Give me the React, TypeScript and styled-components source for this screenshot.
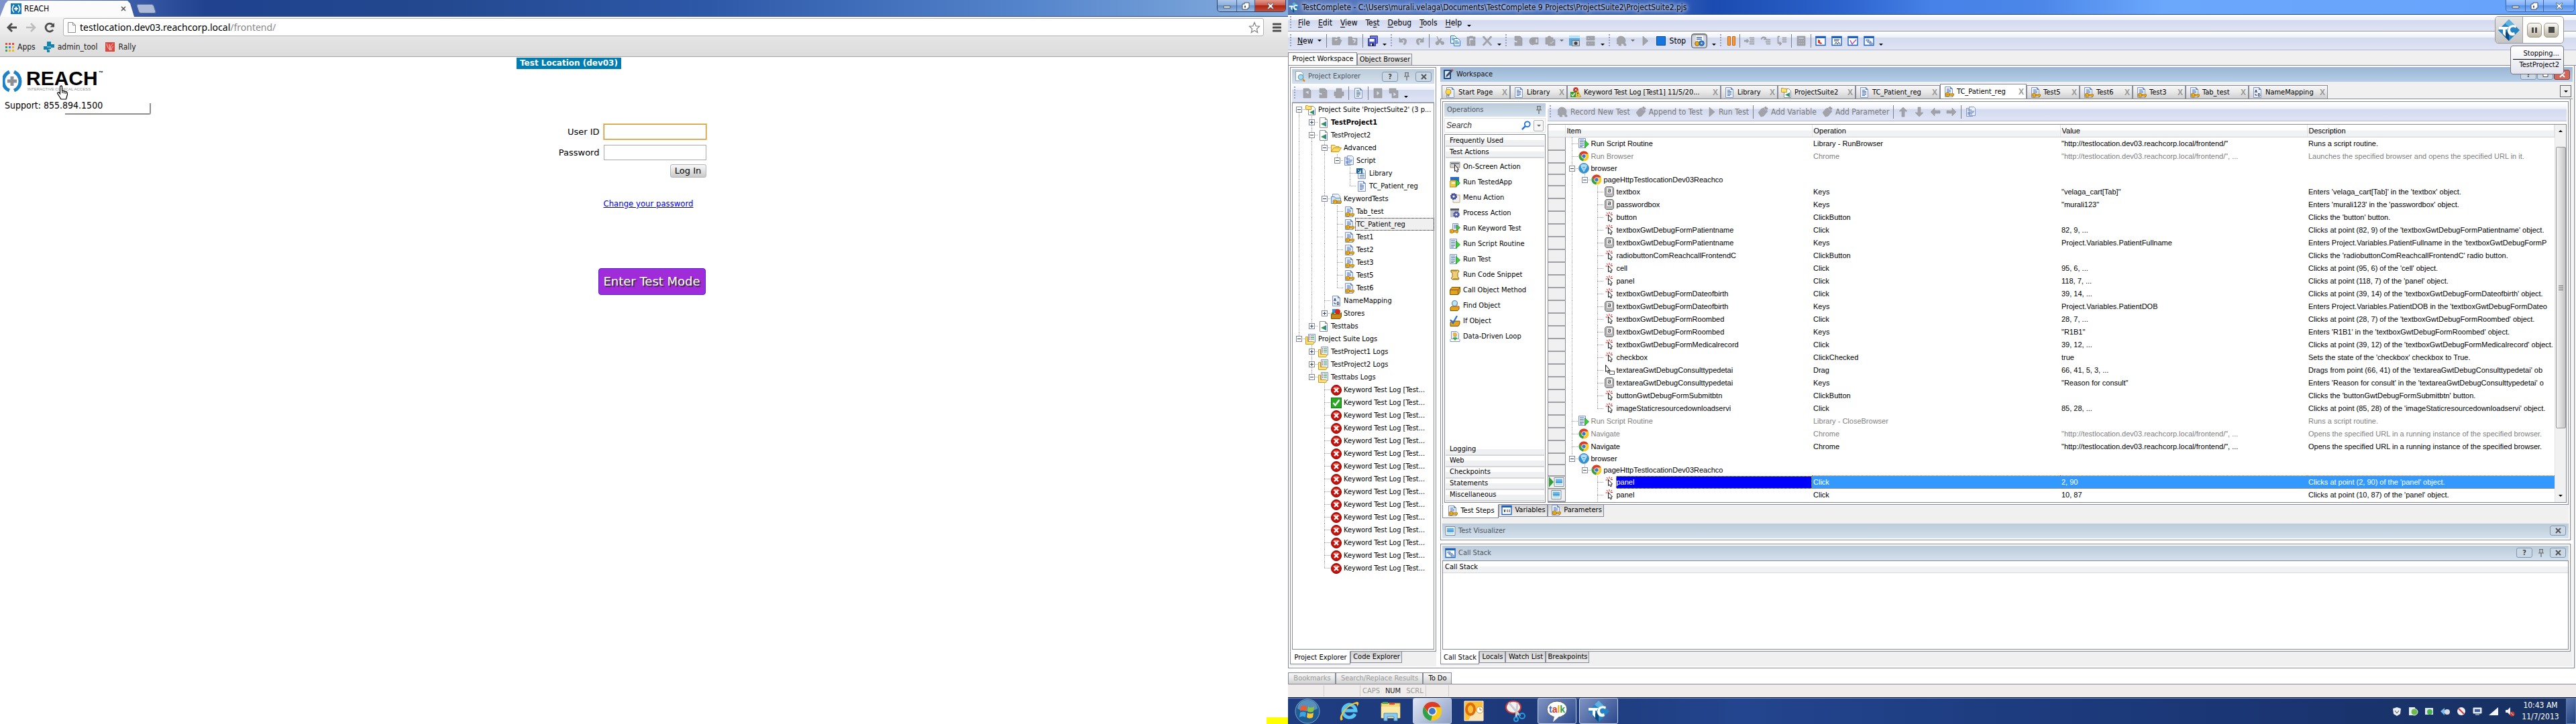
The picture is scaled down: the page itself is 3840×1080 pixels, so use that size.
import React from "react";
import styled, { createGlobalStyle, css } from "styled-components";

const ui = `"DejaVu Sans Condensed", "DejaVu Sans", "Liberation Sans", sans-serif`;
const wide = `"DejaVu Sans", "Liberation Sans", sans-serif`;
const grid = `"Liberation Sans", Arial, sans-serif`;
const line = "#868a98";

const Global = createGlobalStyle`
  *, *::before, *::after { box-sizing: border-box; }
  body { margin: 0; background: #fff; font: 11px/16px ${ui}; color: #000; }
  button, input { font: inherit; color: inherit; }
  svg { display: block; flex: none; }
`;

/* ---------- icons ---------- */

type SvgProps = { s?: number; w?: number; children: React.ReactNode; box?: string };
const Svg = ({ s = 16, w, box = "0 0 16 16", children }: SvgProps) => (
  <svg width={w ?? s} height={s} viewBox={box} aria-hidden="true">{children}</svg>
);
const page = <path d="M2.5.5h8l3 3v12h-11z" fill="#eaf1fc" stroke="#8397c6" />;
const fold = <path d="M10.5.5v3h3" fill="#6e9bd8" stroke="#5c83c4" />;
const keyShape = (
  <g fill="#f0b31c" stroke="#a86f08" strokeWidth=".8">
    <circle cx="6" cy="12" r="3" /><path d="M9 10.8h6.5v2.5h-1v1.3h-1.5v-1.3H9z" /><circle cx="5.5" cy="12" r=".7" fill="#fff" />
  </g>
);
const play = <path d="M9.5 3.5v11l6-5.5z" fill="#3ecb3e" stroke="#118a1a" strokeWidth=".8" />;
const DocIcon = () => <Svg>{page}{fold}<path d="M5 4.500h4M5 6.500h6M5 8.500h6M5 10.500h6M5 12.500h4" stroke="#4f70c0" /></Svg>;
const ScriptIcon = () => <Svg><path d="M1.5 2.5h9v12h-9z" fill="#dfe8fa" stroke="#8397c6" /><path d="M5.5.5h7l2 2v11h-9z" fill="#eaf1fc" stroke="#8397c6" /><path d="M3 5h6M7 7h6M3 9h9M3 11h7" stroke="#4f70c0" /></Svg>;
const DocKeyIcon = () => <Svg>{page}{fold}<path d="M5 4h4M5 6h6M5 8h6" stroke="#4f70c0" />{keyShape}</Svg>;
const LinkDocIcon = () => <Svg>{page}<path d="M7 8h5M5 10.5h7M5 13h7" stroke="#4f70c0" /><path d="M0 0h9v8H0z" fill="#17609c" /><path d="M2 2l4 4M6.5 2.5V6.5H2.5" stroke="#fff" fill="none" /></Svg>;
const ProjIcon = () => <Svg><path d="M2.5.5h8l3 3v12h-11z" fill="#fff" stroke="#8a8f94" /><path d="M10.5.5v3h3" fill="#bbb" stroke="#8a8f94" /><path d="M12 6v8l-8-4z" fill="#2f9a4a" /><path d="M12 6v8l-3-4z" fill="#3b7bd0" /></Svg>;
const SuiteIcon = () => <Svg><path d="M4.5 2.5h7l3 3v10h-10z" fill="#fff" stroke="#8a8f94" /><path d="M13 8v7l-7-3.5z" fill="#2f9a4a" /><path d="M13 8v7l-2.5-3.5z" fill="#3b7bd0" /><path d="M.5 1.5h3l1 1h4v5h-8z" fill="#ffe07a" stroke="#c79a1c" /></Svg>;
const FolderIcon = () => <Svg><path d="M.5 13.5v-10h5l1.5 2h5v2" fill="#fbe69a" stroke="#c9961c" /><path d="M.5 13.5l3.5-6h11.5l-4 6z" fill="#ffd95e" stroke="#c9961c" /></Svg>;
const KeyFolderIcon = () => <Svg><path d="M2.5.5h8l3 3v7h-11z" fill="#eaf1fc" stroke="#8397c6" /><path d="M.5 4.5h5l1 2h8v8h-14z" fill="#cfe2fa" stroke="#5f8bcb" />{keyShape}</Svg>;
const MapIcon = () => <Svg>{page}{fold}<path d="M4.5 8l1.5-4 1.5 4M5 7h2M9.5 9.5v4h1.5c1.5 0 1.5-2 0-2 1 0 1-2 0-2zM5 10v2h3" stroke="#1d2a4c" strokeWidth=".9" fill="none" /></Svg>;
const StoresIcon = () => <Svg><path d="M2 1h7v6H2z" fill="#3a8ee0" /><circle cx="10" cy="5" r="4" fill="#d8251d" /><path d="M1 6h4v3H1z" fill="#2da33c" /><path d="M.5 8.5h13l2-2v6l-2 3H.5z" fill="#c98716" stroke="#7d4f04" /></Svg>;
const LogIcon = () => <Svg><path d="M4.5.5h10v12h-10z" fill="#eaf1fc" stroke="#8397c6" /><path d="M6 3h1M6 5.5h1M6 8h1" stroke="#d33" strokeWidth="1.5" /><path d="M8 3h5M8 5.5h5M8 8h5" stroke="#3a9a4a" /><path d="M.5 4.5h3v7h7l3 1-2 3H.5z" fill="#ffe07a" stroke="#c79a1c" /></Svg>;
const ErrIcon = () => <Svg><circle cx="8" cy="8" r="7.5" fill="#c8120e" stroke="#8b0500" /><path d="M2.5 6a6 5 0 0 1 11 0z" fill="#ea6a5e" /><path d="M5 5l6 6M11 5l-6 6" stroke="#fff" strokeWidth="2.4" /></Svg>;
const OkIcon = () => <Svg><rect x=".5" y=".5" width="15" height="15" fill="#2aa824" stroke="#117a10" /><path d="M3.5 8l3 3.5 6-8" stroke="#fff" strokeWidth="2.2" fill="none" /></Svg>;
const ResultIcon = () => <Svg><circle cx="8" cy="4" r="3.8" fill="#d3221c" /><path d="M6.5 2.5l3 3M9.5 2.5l-3 3" stroke="#fff" /><path d="M10.5 4.5l5 10h-8z" fill="#ffd92e" stroke="#a87f00" strokeWidth=".7" /><path d="M11 8v3M11 12v1" stroke="#222" strokeWidth="1.2" /><path d="M0 7h8v8H0z" fill="#35a52d" /><path d="M1.5 11l2 2 3-4" stroke="#fff" strokeWidth="1.4" fill="none" /></Svg>;
const StartIcon = () => <Svg>{page}{fold}<circle cx="5" cy="7" r="4" fill="#ffd84a" stroke="#b98a10" strokeWidth=".8" /><path d="M3.5 11h3v3h-3z" fill="#8b8b8b" /></Svg>;
const RunScriptIcon = () => <Svg><path d="M.5.5h10v14H.5z" fill="#eaf1fc" stroke="#8397c6" /><path d="M2 3h6M2 5.5h6M2 8h6M2 10.5h6M2 12.5h4" stroke="#4f70c0" />{play}</Svg>;
const ChromeIcon = ({ s = 16 }: { s?: number }) => (
  <Svg s={s}>
    <circle cx="8" cy="8" r="7.5" fill="#f8ca1c" />
    <path d="M8 .5a7.5 7.5 0 0 1 6.700 4.1H8L4.8 9 1.4 4.3A7.5 7.5 0 0 1 8 .5z" fill="#dc3a2b" />
    <path d="M1.4 4.3L4.9 10 8 11.5 7 15.4A7.5 7.5 0 0 1 1.4 4.3z" fill="#31a04c" />
    <circle cx="8" cy="8" r="3.5" fill="#fff" /><circle cx="8" cy="8" r="2.7" fill="#3d78c9" />
  </Svg>
);
const GlobeIcon = () => <Svg><circle cx="8" cy="8" r="7.5" fill="#2e94d8" stroke="#6f93b3" /><path d="M3 4a6 5 0 0 1 10 0l-1 2H4z" fill="#a9dcf7" /><path d="M4 6l4 7 4-7-4 2z" fill="#7cc8f2" stroke="#fff" strokeWidth=".7" /></Svg>;
const KeysIcon = () => <Svg><path d="M3.500.5h9l2 2v11l-2 2h-9l-2-2v-11z" fill="#b9b9b9" stroke="#6c6c6c" /><rect x="4" y="1.5" width="8.5" height="9.5" rx="1" fill="#f2f2f2" stroke="#8e8e8e" strokeWidth=".6" /><path d="M6 4.2h3.5v4.3H6.5V6.3h3" stroke="#444" fill="none" /></Svg>;
const ClickIcon = () => <Svg><path d="M8 0v3M4 1l2 2.5M12 1l-2 2.5M2.5 5h3M10 4.5h3" stroke="#f01515" /><path d="M6.5 4.5v9l2-1.5 1.5 3 1.5-1-1-2.5 2-.5z" fill="#fff" stroke="#000" strokeWidth=".9" /></Svg>;
const DragIcon = () => <Svg><path d="M2.5.5v10l2-1.5 1.5 3.5 1.5-1L6 8.5h3z" fill="#fff" stroke="#000" strokeWidth=".9" /><path d="M8.5 9.5h7v5h-7z" fill="#fff" stroke="#555" /></Svg>;
const TcMark = ({ s = 16 }: { s?: number }) => (
  <Svg s={s} box="0 0 32 32">
    <path d="M16 0l16 16-16 16L0 16z" fill="#2484c4" /><path d="M16 14v18L8 24z" fill="#0a4a80" /><path d="M16 0l8 8-8 3-6-5z" fill="#5fb1e0" />
    <path d="M1 11h14v4h-4v11l-4-5v-6H1zM27 9c-9-3-14 3-13 9 1 5 6 8 11 5l-1-4c-4 2-6-1-6-4s4-5 8-2z" fill="#fff" />
  </Svg>
);
const ReachMark = ({ s = 16 }: { s?: number }) => (
  <Svg s={s}><path d="M0 0h16v16H0z" fill="#1479bd" /><path d="M5 2.5a7 7 0 0 0 0 11M11 2.5a7 7 0 0 1 0 11" stroke="#fff" strokeWidth="1.6" fill="none" /><path d="M8 5v6M5 8h6" stroke="#fff" strokeWidth="2" /></Svg>
);
const PinIcon = () => <Svg s={12} box="0 0 12 12"><path d="M3 .5h6M4 .5v5M8 .5v5M2 6h8M6 6v6" stroke="#666" strokeWidth="1.2" fill="none" /></Svg>;
const PencilIcon = () => <Svg><path d="M1.5 1.5h10v13h-10z" fill="#2a5a98" stroke="#1d3f72" /><path d="M3 3h7v10H3z" fill="#dfeaf8" /><path d="M4 12l1-3 7-8 2.5 2L7 11z" fill="#394a66" /><path d="M12 1l1.5-1L16 2l-1.5 1z" fill="#e0442c" /></Svg>;
const SearchDocIcon = () => <Svg><path d="M1.5.5h8l3 3v11h-11z" fill="#fafcff" stroke="#9aa3b5" /><circle cx="9" cy="9" r="3.8" fill="#a4dcf6" stroke="#4b8fb8" /><path d="M12 12l3 3.5" stroke="#e08a1c" strokeWidth="2.2" /></Svg>;
const WinIcon = ({ mark }: { mark?: React.ReactNode }) => <Svg><path d="M1 1.5h14v13H1z" fill="#fff" stroke="#2166bd" strokeWidth="1.4" /><path d="M.5 1h15v3H.5z" fill="#1e62c0" />{mark}</Svg>;
const stackMark = <path d="M4 6h4v2H4zM6 8.5h5v2H6zM9 11h4v2H9z" fill="#dbe7fa" stroke="#3f68a8" strokeWidth=".8" />;
const PicIcon = () => <Svg><path d="M1 1.5h14v13H1z" fill="#fff" stroke="#7a8797" /><path d="M3 3.5h10v4H3z" fill="#64b7ee" /><path d="M3 7.5h10v1.5H3z" fill="#1b78c8" /><path d="M3 9h10v3.5H3z" fill="#aee0ef" /></Svg>;

const Gray = ({ d, w = 16 }: { d: string; w?: number }) => (
  <Svg s={16} w={w} box={`${(16 - w) / 2} 0 ${w} 16`}><path d={d} fill="#a2a3a8" stroke="#929399" strokeWidth=".6" fillRule="evenodd" /></Svg>
);
const gOpen = "M1 14V3h5l1 2h6v2h2l-3 7zM3 7l7-5 3 1-6 5z";
const gClose = "M1 2h5l1 2h7v10H1zM6 6l4 2-3 4 4-1 2-5-5-2z";
const gUndo = "M2 3v7h6L5.5 7.5C9 5 12 8 8 13l2 1c6-7 1-12-6-8z";
const gRedo = "M14 3v7H8l2.5-2.5C7 5 4 8 8 13l-2 1C0 7 5 2 12 6z";
const gCut = "M5 1l2 7-2 1a2.5 2.5 0 1 0 3 2l1-1 2 1a2.3 2.3 0 1 0 2-2l-3-1 2-3-1-1-3 3z";
const gPaste = "M2 2h3l1-1h4l1 1h3v4h-3V4H5v9h1v2H2zM7 7h7v8H7z";
const gX = "M1 2l2-1 5 5.5L13 1l2 1-5.5 6L15 14l-2 1-5-5.5L3 15l-2-1 5.5-6z";
const gDoc = "M3 1h8l3 3v11H3v-5l4 1V8L3 7zM8 5v1h4V5z";
const gGear = "M1 8a5 5 0 0 1 5-5h8v10H8l-2 1a5 5 0 0 1-5-6zm5-3v6M3 8h6m1-3h3v6h-3z";
const gCheck = "M1 3h3l1-2h3l1 2h3v3h3v9H5v-2H1zM7 10l2 3 5-5-1-1-4 4-1-2z";
const gList = "M2 1h12v6H2zM2 9h12v6H2zM4 3v2h2V3zM4 11v2h2v-2zM8 3v1h4V3zM8 11v1h4v-1z";
const gHead = "M7 1a6 6 0 0 0-5 9l-1 2 3 1v2h4l-1-3h4l1 3h3v-2l-2-2c3-5-1-10-6-10z";
const gPlay = "M4 1l8 7-8 7z";
const gStep = "M0 7h4V5l3 3-3 3V9H0zM8 3h7v1H8zM9 6h6v1H9zM8 9h7v1H8zM8 12h7v1H8z";
const gOver = "M1 5c1-4 6-4 7-1V2l1 4H5l2-1C6 3 3 3 2 6zM9 6h6v1H9zM8 9h7v1H8zM9 12h6v1H9z";
const gOut = "M5 1H2v11h3v3l3-3-3-3v2H3V2h2zM9 3h6v1H9zM9 6h6v1H9zM9 9h6v1H9z";
const gCalc = "M2 1h12v14H2zM4 3v2h8V3zM4 7v2h2V7zM7 7v2h2V7zM10 7v2h2V7zM4 11v2h2v-2zM7 11v2h2v-2zM10 11v2h2v-2z";
const gNewDoc = "M3 1h8l3 3v11H3zM5 6l6-2v6z";
const gPlus = "M1 9l5-6 4-1 5 5-6 7-4 1zM11 0h2v2h2v2h-2v2h-2V4H9V2h2z";
const gPrint = "M4 1h8v5h3v6h-3v3H3v-3H1V6h3z";
const gUp = "M8 1l6 6h-4v8H6V7H2z";
const gDown = "M8 15l6-6h-4V1H6v8H2z";
const gLeft = "M1 8l6-6v4h8v4H7v4z";
const gRight = "M15 8L9 2v4H1v4h8v4z";

const SaveIcon = () => <Svg><path d="M4.5.5h11v11h-11z" fill="#6a76d8" stroke="#3a3fa4" /><path d="M1.5 4.5h11v11h-11z" fill="#5763d0" stroke="#2f3590" /><path d="M3.5 5h7v4h-7z" fill="#fff" /><path d="M4 11.5h6v4H4z" fill="#222a5c" /><path d="M5 12h2v3H5z" fill="#fff" /></Svg>;
const CopyIcon = () => <Svg><path d="M1.5.5h6l3 3v8h-9z" fill="#e9f4ff" stroke="#2a7ac9" /><path d="M6.5 4.5h6l3 3v8h-9z" fill="#e9f4ff" stroke="#2a7ac9" /><path d="M3 4h3M3 6h3M8 8h4M8 10h6M8 12h6" stroke="#2a7ac9" /></Svg>;
const CameraIcon = () => <Svg><path d="M0 0h16v15H0z" fill="#59a7dd" /><path d="M0 0h16v4H0z" fill="#b8e1f7" /><path d="M4.5 7.5h11v8h-11z" fill="#c7cdd2" stroke="#6b747c" /><circle cx="10" cy="11.5" r="2.5" fill="#37424b" /></Svg>;
const ToggleDocIcon = () => <Svg><path d="M3 0h11v10H3z" fill="#fff" /><path d="M4 3h8M4 5.5h8" stroke="#3f6bbf" strokeWidth="1.4" /><circle cx="5" cy="12" r="3.3" fill="#e8ad1e" stroke="#8b6108" /><circle cx="11.5" cy="11.5" r="3.8" fill="#3380d2" stroke="#174f93" /><circle cx="11.5" cy="11.5" r="1" fill="#fff" /></Svg>;
const OnScreenIcon = () => <Svg><path d="M1 1h14v8H1z" fill="#d8d4cb" stroke="#8b8578" /><path d="M2 2h12v2H2z" fill="#6f7f9a" /><path d="M7.5 4.5v10l2-1.5 1.5 3 1.5-1-1-3h2z" fill="#fff" stroke="#000" strokeWidth=".9" /></Svg>;
const TestedAppIcon = () => <Svg><path d="M1 0h13v12H1z" fill="#2a6ccc" /><path d="M2 5h8v10H0V7z" fill="#f5c84a" stroke="#a2770d" strokeWidth=".8" /><path d="M3 8h5v2H3z" fill="#fff" />{play}</Svg>;
const GearIcon = () => <Svg><path d="M5 4h10v11H5z" fill="#eef1fb" stroke="#c9a660" /><circle cx="6" cy="6" r="4" fill="#5560b0" stroke="#31397e" strokeDasharray="2 1" strokeWidth="2" /><circle cx="6" cy="6" r="1.5" fill="#fff" /></Svg>;
const ProcessIcon = () => <Svg><path d="M1 1h13v13H1z" fill="#bfc4c9" /><path d="M1 1h13v3H1z" fill="#555b63" /><circle cx="10" cy="10" r="3.8" fill="#6a74c2" stroke="#3c4590" strokeDasharray="2 1" strokeWidth="2" /><circle cx="10" cy="10" r="1.3" fill="#fff" /></Svg>;
const RunKeyIcon = () => <Svg><path d="M4.5.5h8v10h-8z" fill="#eaf1fc" stroke="#8397c6" /><path d="M6 3h5M6 5h5M6 7h5" stroke="#4f70c0" /><path d="M10.5 2.5v8l5-4z" fill="#3ecb3e" stroke="#118a1a" strokeWidth=".8" /><g transform="translate(-3 0)">{keyShape}</g></Svg>;
const SnippetIcon = () => <Svg><path d="M2 1h11l1 2-2 2v6l2 2-1 2H4l-2-2 2-2V5L2 4z" fill="#f0cf74" stroke="#8b6a12" /><path d="M2 2h9M5 14h8" stroke="#8b6a12" /></Svg>;
const MethodIcon = () => <Svg><path d="M.5 7.5l3-4h12v7l-3 4H.5z" fill="#e2a41c" stroke="#7d5304" /><path d="M.5 7.5h12v7M12.5 7.5l3-4" stroke="#7d5304" fill="none" /></Svg>;
const FindIcon = () => <Svg><path d="M1 11l2-2h11v4l-2 2.5H1z" fill="#e2a41c" stroke="#7d5304" /><circle cx="7.5" cy="4.5" r="4" fill="#bfe3fa" stroke="#5b8ab2" strokeWidth="1.2" /><path d="M10.5 8l3 4" stroke="#e8862a" strokeWidth="2" /></Svg>;
const IfIcon = () => <Svg><path d="M1 10l2-2h12v4l-2 3.5H1z" fill="#e2a41c" stroke="#7d5304" /><path d="M1 6l4 5L11 0" stroke="#2b6fd0" strokeWidth="2.2" fill="none" /></Svg>;
const LoopIcon = () => <Svg><path d="M2.5.5h8l3 3v8h-11z" fill="#eaf1fc" stroke="#8397c6" /><path d="M5 3h5M5 5h6M5 7h6" stroke="#e2a41c" strokeWidth="1.4" /><path d="M8 7v5M5 10l3 3.5L11 10z" fill="#37a845" stroke="#37a845" /><path d="M1 12v3.5h14V12" fill="none" stroke="#8397c6" /></Svg>;

/* ---------- shared parts ---------- */

const Screens = styled.div`
  display: grid; grid-template-columns: 1fr 1fr; min-height: 100vh; overflow: hidden;
`;
const Dotted = css`
  background-image: radial-gradient(circle at 1px 1px, #9aa0b8 1px, transparent 1px);
  background-size: 3px 4px; background-repeat: repeat-y;
`;
const Grip = styled.i`width: 3px; height: 20px; flex: none; ${Dotted}`;
const Sep = styled.i<{ $m?: number }>`width: 1px; height: 20px; background: #7b7f8e; flex: none; margin: 0 ${(p) => p.$m ?? -2}px;`;
const Caret = styled.i<{ $low?: boolean; $grey?: boolean }>`
  border: 3px solid transparent; border-top-color: ${(p) => (p.$grey ? "#666" : "#000")}; border-bottom: 0; flex: none;
  ${(p) => p.$low && "align-self: flex-end; margin: 0 -2px 6px -1px;"}
`;
const UpCaret = styled.i`border: 3px solid transparent; border-bottom-color: #000; border-top: 0; flex: none;`;
const WinButtons = styled.div<{ $dark?: boolean }>`
  display: flex; align-self: flex-start; height: 18px; border: 1px solid ${(p) => (p.$dark ? "#2b3f66" : "#3f66a8")}; border-top: 0; border-radius: 0 0 5px 5px; overflow: hidden;
`;
const WinButton = styled.button<{ $w: number; $red?: boolean }>`
  width: ${(p) => p.$w}px; border: 0; padding: 0; display: flex; align-items: center; justify-content: center;
  background: ${(p) => (p.$red ? "linear-gradient(#e2998c, #cc5a49 45%, #ad2412 50%, #c2503a)" : "linear-gradient(#ffffff66, #ffffff22 45%, #00205022 50%, #ffffff33)")};
  & + & { border-left: 1px solid #40609a; }
`;
const MinGlyph = () => <Svg s={12} box="0 0 12 12"><path d="M1 6h10v3H1z" fill="#fff" stroke="#44505f" /></Svg>;
const RestoreGlyph = () => <Svg s={12} box="0 0 12 12"><path d="M4 1h7v8H9v2H1V3h3z" fill="#fff" stroke="#44505f" /><path d="M4 5.5h2v3H4z" fill="#44505f" /></Svg>;
const CloseGlyph = () => <Svg s={12} box="0 0 12 12"><path d="M2 1l4 3 4-3 1 1-3 4 3 4-1 1-4-3-4 3-1-1 3-4-3-4z" fill="#fff" stroke="#44505f" strokeWidth=".8" /></Svg>;
const WindowControls = ({ chrome }: { chrome?: boolean }) => (
  <WinButtons $dark={chrome}>
    <WinButton $w={28} aria-label="Minimize"><MinGlyph /></WinButton>
    <WinButton $w={27} aria-label="Restore"><RestoreGlyph /></WinButton>
    <WinButton $w={46} $red={chrome} aria-label="Close"><CloseGlyph /></WinButton>
  </WinButtons>
);

/* ---------- browser ---------- */

const Browser = styled.section`position: relative; display: flex; flex-direction: column; background: #fff; min-width: 0;`;
const TabStrip = styled.div`
  height: 25px; display: flex; align-items: flex-start; padding-right: 3px;
  background: linear-gradient(90deg, #7f94cb, #4a6ab5 7%, #20428f 16%, #23488f 33%, #2d58a8 55%, #5585cc 80%, #86aede);
  border-bottom: 1px solid #3a517f;
`;
const BrowserTab = styled.div`
  width: 200px; height: 24px; margin-top: 1px; padding: 0 12px 0 16px; display: flex; align-items: center; gap: 4px; font-size: 12px;
  background: #fbfbfb; clip-path: polygon(0 100%, 8px 4px, 12px 0, 190px 0, 194px 4px, 100% 100%);
`;
const Push = styled.span`flex: 1;`;
const NewTab = styled.button`width: 26px; height: 14px; margin: 6px 0 0 5px; border: 1px solid #56709f; background: #adbbd8; border-radius: 3px; transform: skewX(18deg);`;
const IconButton = styled.button`border: 0; padding: 0; background: none; display: flex; align-items: center; justify-content: center;`;
const NavBar = styled.div`
  height: 31px; display: flex; align-items: center; gap: 12px; padding: 0 10px 0 10px; background: linear-gradient(#f4f4f4, #e6e6e6);
`;
const Address = styled.div`
  flex: 1; height: 27px; display: flex; align-items: center; gap: 4px; padding: 0 4px; border: 1px solid #b2b2b2; border-radius: 3px; background: #fff;
  font: 14px/20px "Noto Sans", ${ui}; margin-right: 1px;
  span { color: #888; }
`;
const Bookmarks = styled.nav`
  height: 29px; display: flex; align-items: center; gap: 12px; padding: 0 8px; background: linear-gradient(#e4e4e4, #dcdcdc); border-bottom: 1px solid #a5a5a5;
  font-size: 12px;
  a { display: flex; align-items: center; gap: 5px; color: #222; text-decoration: none; }
`;
const Site = styled.main`flex: 1; display: flex; flex-direction: column; align-items: center; font: 13px/18px ${wide}; padding: 1px 224px 0 0; position: relative;`;
const Banner = styled.h1`margin: 0; height: 17px; padding: 0 5px; background: #007db1; color: #fff; font: bold 12px/17px ${wide};`;
const Brand = styled.div`
  position: absolute; left: 4px; top: 19px; display: flex; flex-direction: column; font: 14px/20px ${ui};
  p { margin: 7px 0 0 3px; }
`;
const Login = styled.form`
  margin: 82px 0 0 50px; display: grid; grid-template-columns: 200px 153px; column-gap: 6px; row-gap: 8px; align-items: center;
  label { text-align: right; }
`;
const Field = styled.input<{ $hot?: boolean }>`
  height: 23px; width: 100%; border: 1px solid ${(p) => (p.$hot ? "#c8963e" : "#a9a9a9")}; background: #fff; outline: none;
  ${(p) => p.$hot && "box-shadow: 0 0 0 1px #f5c978;"}
`;
const LogIn = styled.button`
  grid-column: 2; justify-self: end; height: 20px; width: 54px; padding: 0; margin-top: -2px; border: 1px solid #b5b5b5; border-radius: 3px; background: linear-gradient(#f8f8f8, #c9c9c9);
  font: 13px/18px ${wide};
`;
const PwLink = styled.a`grid-column: 2; margin-top: 22px; color: #00e; font: 13px/18px ${ui}; white-space: nowrap;`;
const TestMode = styled.button`
  grid-column: 2; justify-self: end; width: 160px; height: 40px; margin: 79px 1px 0 0; padding: 0; border: 1px solid #5426d6; border-radius: 4px;
  background: #9f2bd9; color: #fff; font: 18px/38px ${wide}; text-shadow: 2px 2px 1px #333; white-space: nowrap;
`;
const HandCursor = styled.div`position: absolute; left: 84px; top: 127px;`;
const StaleShadow = styled.i`
  position: absolute; left: 97px; top: 154px; width: 128px; height: 17px; border: solid #8f8f8f; border-width: 0 2px 2px 0; border-radius: 0 0 3px 0;
`;
const YellowStrip = styled.i`position: absolute; right: 0; bottom: 0; width: 32px; height: 10px; background: #ff0;`;

const ReachLogo = () => (
  <svg width="160" height="36" viewBox="0 0 160 36" role="img" aria-label="REACH Interactive Clinical Access">
    <path d="M10 3C-2 9-2 26 10 31M17 3c12 6 12 23 0 28" stroke="#1d83c6" strokeWidth="5" fill="none" />
    <path d="M14 10v14M7 17h14" stroke="#8d9196" strokeWidth="5" />
    <text x="35" y="23" fontFamily="Liberation Sans" fontSize="30" fontWeight="bold">REACH</text>
    <text x="143" y="7" fontFamily="Liberation Sans" fontSize="7" fontWeight="bold">™</text>
    <text x="37" y="31" fontFamily="Liberation Sans" fontSize="6" fill="#8d9196">INTERACTIVE CLINICAL ACCESS</text>
  </svg>
);

const BrowserWindow = () => (
  <Browser>
    <TabStrip>
      <BrowserTab><ReachMark />REACH<Push />
        <IconButton aria-label="Close tab"><Svg s={8} box="0 0 8 8"><path d="M1 1l6 6M7 1L1 7" stroke="#555" strokeWidth="1.6" /></Svg></IconButton>
      </BrowserTab>
      <NewTab aria-label="New tab" /><Push />
      <WindowControls chrome />
    </TabStrip>
    <NavBar>
      <IconButton aria-label="Back"><Svg><path d="M8 2L2 8l6 6M2.5 8H15" stroke="#4d4d4d" strokeWidth="3" fill="none" /></Svg></IconButton>
      <IconButton aria-label="Forward"><Svg><path d="M8 2l6 6-6 6M14 8H1" stroke="#bdbdbd" strokeWidth="2.6" fill="none" /></Svg></IconButton>
      <IconButton aria-label="Reload"><Svg><path d="M13 11.5A6 6 0 1 1 12.5 4" stroke="#4d4d4d" strokeWidth="2.8" fill="none" /><path d="M15 1v6.5H8.5z" fill="#4d4d4d" /></Svg></IconButton>
      <Address>
        <Svg><path d="M2.5.5h7l4 4v11h-11z" fill="#fafafa" stroke="#8e8e8e" /><path d="M9.5.5v4h4" fill="none" stroke="#8e8e8e" /></Svg>
        <div>testlocation.dev03.reachcorp.local<span>/frontend/</span></div><Push />
        <Svg s={18} box="0 0 18 18"><path d="M9 1.5l2.2 5.3 5.3.4-4 3.7 1.2 5.6L9 13.5l-4.7 3 1.2-5.6-4-3.7 5.3-.4z" fill="#fff" stroke="#8a8a8a" strokeWidth="1.3" /></Svg>
      </Address>
      <IconButton aria-label="Menu"><Svg s={14} w={13} box="0 0 13 14"><path d="M1 2h11M1 7h11M1 12h11" stroke="#505050" strokeWidth="3" strokeLinecap="round" /></Svg></IconButton>
    </NavBar>
    <Bookmarks>
      <a href="#apps"><Svg s={13} box="0 0 13 13">
        <path d="M0 0h3v3H0zM5 0h3v3H5zM10 0h3v3h-3z" fill="#e8453c" /><path d="M0 5h3v3H0z" fill="#39a457" /><path d="M5 5h3v3H5z" fill="#3f83f0" /><path d="M10 5h3v3h-3z" fill="#f3b51f" /><path d="M0 10h3v3H0z" fill="#39a457" /><path d="M5 10h3v3H5zM10 10h3v3h-3z" fill="#f3b51f" />
      </Svg>Apps</a>
      <a href="#admin"><Svg><path d="M5 0h6v4h5v5h-5v2H9v5H5v-4H0V7h5V5z" fill="#1383aa" /><path d="M5 8h6M7 12h2" stroke="#bfe4f0" /></Svg>admin_tool</a>
      <a href="#rally"><Svg s={14} box="0 0 14 14"><path d="M0 0h14v14H0z" fill="#e0463e" /><path d="M2 2c1 5 3 8 5 10 0-4 1-8 5-10M6 3c0 4 1 6 1 9M9 12c0-3 1-5 3-6" stroke="#fbd9d5" fill="none" /></Svg>Rally</a>
    </Bookmarks>
    <Site>
      <Banner>Test Location (dev03)</Banner>
      <Brand><ReachLogo /><p>Support: 855.894.1500</p></Brand>
      <Login onSubmit={(e) => e.preventDefault()}>
        <label htmlFor="uid">User ID</label><Field id="uid" $hot />
        <label htmlFor="pwd">Password</label><Field id="pwd" type="password" />
        <LogIn type="submit">Log In</LogIn>
        <PwLink href="#change">Change your password</PwLink>
        <TestMode type="button">Enter Test Mode</TestMode>
      </Login>
    </Site>
    <StaleShadow />
    <HandCursor><Svg s={22} w={18} box="0 0 18 22"><path d="M6 1.5c1.500-1.500 2.500 0 2.500 1V8l6 1.5c2 .5 2 2 2 4.5l-2 7H7L2 13c-1-2 1-3 2-2l1.5 2V2.5z" fill="#fff" stroke="#000" strokeWidth="1.2" /><path d="M9 8v4M11.5 9v3.5M14 10v3" stroke="#000" /></Svg></HandCursor>
    <YellowStrip />
  </Browser>
);

/* ---------- TestComplete shell ---------- */

const Ide = styled.section`position: relative; display: flex; flex-direction: column; min-width: 0; background: #f0f0f0; white-space: nowrap;`;
const TitleBar = styled.header`
  height: 22px; display: flex; align-items: center; gap: 4px; padding: 0 2px 0 1px; border-bottom: 1px solid #2a4a87; font-size: 12px;
  background: linear-gradient(90deg, #5a76b4, #4f74c4 10%, #3a63b8 29%, #1b4bb0 33%, #2c63cc 43%, #4682e8 50%, #4b86e8 58%, #6ba8fc 68%, #66a2fa);
  > span { flex: 1; text-shadow: 0 0 4px #c5d4f0, 0 0 6px #c5d4f0, 0 0 8px #b4c6ea, 0 0 10px #b4c6ea; }
`;
const barFill = "linear-gradient(#ffffff, #eef1fa 32%, #d3daee 34%, #dfe4f5)";
const MenuBar = styled.nav`
  height: 25px; display: flex; align-items: center; gap: 12px; padding: 0 3px; border-bottom: 1px solid #9a9aa4; background: ${barFill}; font-size: 12px;
  ${Grip} { margin-right: -3px; } ${Caret} { margin-left: -4px; }
  u { text-underline-offset: 2px; }
`;
const MenuItem = styled.button`border: 0; padding: 0; background: none;`;
const ToolBar = styled.div<{ $h: number; $g?: number }>`
  height: ${(p) => p.$h}px; display: flex; align-items: center; gap: ${(p) => p.$g ?? 8}px; padding: 0 3px; border-bottom: 1px solid #b3b9d2; background: ${barFill}; font-size: 12px; color: #000;
`;
const Tool = styled.button<{ $on?: boolean; $dim?: boolean }>`
  border: 0; padding: 0; background: none; display: flex; align-items: center; gap: ${(p) => (p.$dim ? 4 : 6)}px; color: ${(p) => (p.$dim ? "#777" : "inherit")};
  ${(p) => p.$on && "height: 22px; padding: 0 3px; border: 1px solid #5c5f68; border-radius: 4px; background: #d4d6e0; box-shadow: inset 0 1px 2px #777;"}
`;
const Pause = () => <Svg s={14} w={12} box="0 0 12 14"><path d="M.5.5h4v13h-4zM7.5.5h4v13h-4z" fill="#f59a3c" stroke="#c8690e" /></Svg>;

/* Tabs stand above their panel, or hang below it when down is set. */
const Tabs = styled.div<{ $h: number; $down?: boolean; $pad?: number }>`
  height: ${(p) => p.$h}px; display: flex; align-items: ${(p) => (p.$down ? "flex-start" : "flex-end")}; padding-left: ${(p) => p.$pad ?? 0}px; flex: none;
  ${(p) => (p.$down ? "margin-top: -1px; position: relative;" : `box-shadow: inset 0 -1px ${line};`)}
`;
const Tab = styled.button<{ $on?: boolean; $down?: boolean; $w: number; $off?: boolean; $h?: number }>`
  width: ${(p) => p.$w}px; height: ${(p) => (p.$h ?? 18) + (p.$on ? 2 : 0)}px; padding: 0 3px 0 4px; display: flex; align-items: center; justify-content: center; gap: 4px;
  border: 1px solid ${line};
  ${(p) => p.$on && (p.$down ? "border-top-color: #fff;" : "border-bottom-color: #fff;")}
  color: ${(p) => (p.$off ? "#9a9a9a" : "#000")};
  background: ${(p) => (p.$on ? "#fff" : p.$down ? "linear-gradient(#d2d2d2, #efefef)" : "linear-gradient(#f7f7f7, #e9e9e9 45%, #cfcfcf)")};
  > b { margin-left: auto; font: bold 12px/14px "Liberation Sans", sans-serif; color: #999; }
`;
const Body = styled.div`flex: 1; display: flex; gap: 6px; margin: -1px 2px 0 0; padding: 2px; border: 1px solid ${line}; background: #fff; min-height: 0;`;
const Column = styled.div<{ $w?: number }>`${(p) => (p.$w ? `width: ${p.$w}px; flex: none;` : "flex: 1; min-width: 0;")} display: flex; flex-direction: column; background: #f0f0f0;`;
const Frame = styled.div<{ $grow?: boolean; $p: number }>`
  border: 1px solid ${line}; padding: ${(p) => p.$p}px; background: #fff; display: flex; flex-direction: column; min-width: 0; ${(p) => p.$grow && "flex: 1;"}
`;
const PanelHead = styled.div<{ $strong?: boolean; $h?: number }>`
  height: ${(p) => p.$h ?? 22}px; flex: none; display: flex; align-items: center; gap: 4px; padding: 0 4px; color: ${(p) => (p.$strong ? "#111" : "#4c555e")};
  background: ${(p) => (p.$strong ? "linear-gradient(#9bb5d3, #b5cde6)" : "linear-gradient(#bccbd9, #d3e0ee)")};
`;
const HeadTools = styled.div<{ $g?: number }>`margin-left: auto; display: flex; align-items: center; gap: ${(p) => p.$g ?? 7}px;`;
const HeadButton = styled.button<{ $red?: boolean }>`
  width: 24px; height: 15px; padding: 0; display: flex; align-items: center; justify-content: center; border: 1px solid ${(p) => (p.$red ? "#8c3a3a" : "#8496ab")};
  border-radius: 3px; background: ${(p) => (p.$red ? "#d4675c" : "#cad8e6")}; font: bold 11px/13px ${ui}; color: #444;
`;
const HeadX = ({ red }: { red?: boolean }) => <HeadButton $red={red} aria-label="Close"><Svg s={9} box="0 0 9 9"><path d="M1 1l7 7M8 1L1 8" stroke={red ? "#fff" : "#555"} strokeWidth="2" /></Svg></HeadButton>;

/* ---------- tree guides ---------- */

const vLine = (y: string, h: string) => `repeating-linear-gradient(#9a9a9a 0 1px, transparent 1px 2px) 9px ${y} / 1px ${h} no-repeat`;
const hLine = `repeating-linear-gradient(90deg, #9a9a9a 0 1px, transparent 1px 2px) 9px 50% / 10px 1px no-repeat`;
const through = `${vLine("0", "100%")}, ${hLine}`;
const last = `${vLine("0", "50%")}, ${hLine}`;
const guide: Record<string, string> = {
  " ": "none", "|": vLine("0", "100%"), T: through, L: last, "+": through, "-": through, "^": `${vLine("100%", "50%")}, ${hLine}`, m: last, p: last,
};
const GuideCell = styled.span<{ $k: string }>`width: 19px; flex: none; align-self: stretch; display: flex; align-items: center; padding-left: 5px; background: ${(p) => guide[p.$k]};`;
const PlusBox = ({ plus }: { plus: boolean }) => (
  <Svg s={9} box="0 0 9 9"><rect x=".5" y=".5" width="8" height="8" fill="#fff" stroke="#868a98" /><path d={plus ? "M2 4.5h5M4.5 2v5" : "M2 4.5h5"} stroke="#1f3f94" /></Svg>
);
const Guides = ({ g }: { g: string }) => (
  <>{g.split("").map((k, i) => <GuideCell $k={k} key={i}>{"+-^mp".includes(k) ? <PlusBox plus={k === "+" || k === "p"} /> : null}</GuideCell>)}</>
);
const TreeRow = styled.div<{ $h?: number }>`height: ${(p) => p.$h ?? 19}px; display: flex; align-items: center;`;
const TreeText = styled.span<{ $bold?: boolean; $box?: boolean }>`
  margin-left: 2px; padding-left: 1px; line-height: 17px; overflow: hidden; text-overflow: ellipsis; ${(p) => p.$bold && "font-weight: bold;"}
  ${(p) => p.$box && "flex: 1; background: #f0f0f0; outline: 1px dotted #000;"}
`;

type Node = [string, React.FC, string, string?];
const nodes: Node[] = [
  ["^", SuiteIcon, "Project Suite 'ProjectSuite2' (3 p..."],
  ["|+", ProjIcon, "TestProject1", "bold"],
  ["|-", ProjIcon, "TestProject2"],
  ["||-", FolderIcon, "Advanced"],
  ["|||m", ScriptIcon, "Script"],
  ["||| T", LinkDocIcon, "Library"],
  ["||| L", DocIcon, "TC_Patient_reg"],
  ["||-", KeyFolderIcon, "KeywordTests"],
  ["|||T", DocKeyIcon, "Tab_test"],
  ["|||T", DocKeyIcon, "TC_Patient_reg", "box"],
  ["|||T", DocKeyIcon, "Test1"],
  ["|||T", DocKeyIcon, "Test2"],
  ["|||T", DocKeyIcon, "Test3"],
  ["|||T", DocKeyIcon, "Test5"],
  ["|||L", DocKeyIcon, "Test6"],
  ["||T", MapIcon, "NameMapping"],
  ["||p", StoresIcon, "Stores"],
  ["|p", ProjIcon, "Testtabs"],
  ["m", LogIcon, "Project Suite Logs"],
  [" +", LogIcon, "TestProject1 Logs"],
  [" +", LogIcon, "TestProject2 Logs"],
  [" m", LogIcon, "Testtabs Logs"],
  ...Array.from({ length: 15 }, (_, i): Node => [i === 14 ? "  L" : "  T", i === 1 ? OkIcon : ErrIcon, "Keyword Test Log [Test..."]),
];

const ProjectExplorer = () => (
  <Column $w={218}>
    <Frame $p={2} $grow>
      <PanelHead><SearchDocIcon />Project Explorer<HeadTools><HeadButton>?</HeadButton><PinIcon /><HeadX /></HeadTools></PanelHead>
      <ToolBar $h={28}>
        <Grip />{[gNewDoc, gDoc, gPrint].map((d) => <Tool key={d}><Gray d={d} /></Tool>)}<Sep /><Tool><DocIcon /></Tool><Sep />
        <Tool><Gray d="M2 1h12v14H2zM6 4v8l5-4z" /></Tool><Tool><Gray d="M1 1h10v3h3v11H5V8H1zM7 6v7l5-3z" /></Tool><Caret $low />
      </ToolBar>
      <Frame $p={0} $grow>
        {nodes.map(([g, Icon, text, mod], i) => (
          <TreeRow key={i}><Guides g={g} /><Icon /><TreeText $bold={mod === "bold"} $box={mod === "box"}>{text}</TreeText></TreeRow>
        ))}
      </Frame>
    </Frame>
    <Tabs $h={23} $down><Tab $w={90} $down $on>Project Explorer</Tab><Tab $w={77} $down>Code Explorer</Tab></Tabs>
  </Column>
);

/* ---------- operations ---------- */

const Ops = styled.div`width: 151px; flex: none; display: flex; flex-direction: column; gap: 2px;`;
const SearchRow = styled.div`height: 22px; display: flex; align-items: center; gap: 4px; padding-right: 2px; border: 1px solid #e1e1e1;
  input { flex: 1; min-width: 0; border: 0; outline: 0; padding: 0 2px; font: italic 12px/16px ${grid}; background: none; }
  input::placeholder { color: #333; font-style: italic; opacity: 1; }
`;
const DropBox = styled.button`width: 15px; height: 17px; padding: 0; display: flex; align-items: center; justify-content: center; border: 1px solid #b0b0b0; border-radius: 2px; background: #f7f7f7;`;
const OpsList = styled.div`flex: 1; display: flex; flex-direction: column; border: 1px solid ${line}; padding: 1px;`;
const OpsGroup = styled.button`height: 17px; flex: none; border: 0; border-bottom: 2px solid #d4d6da; padding: 0 6px; text-align: left; background: linear-gradient(#fff 45%, #eff0f2 50%); line-height: 14px;`;
const OpsItem = styled.button`height: 23px; border: 0; background: none; padding: 0 0 0 6px; display: flex; align-items: center; gap: 4px; text-align: left;`;
const OpsItems = styled.div`flex: 1; display: flex; flex-direction: column; padding-top: 1px;`;
const actions: [React.FC, string][] = [
  [OnScreenIcon, "On-Screen Action"], [TestedAppIcon, "Run TestedApp"], [GearIcon, "Menu Action"], [ProcessIcon, "Process Action"],
  [RunKeyIcon, "Run Keyword Test"], [RunScriptIcon, "Run Script Routine"], [RunScriptIcon, "Run Test"], [SnippetIcon, "Run Code Snippet"],
  [MethodIcon, "Call Object Method"], [FindIcon, "Find Object"], [IfIcon, "If Object"], [LoopIcon, "Data-Driven Loop"],
];
const Operations = () => (
  <Ops>
    <PanelHead $h={20}>Operations<HeadTools><PinIcon /></HeadTools></PanelHead>
    <SearchRow>
      <input aria-label="Search operations" placeholder="Search" />
      <Svg s={14}><circle cx="10" cy="6" r="4.5" fill="#fff" stroke="#1f6fe0" strokeWidth="2" /><path d="M7 9l-6 6" stroke="#1f6fe0" strokeWidth="2.6" /></Svg>
      <DropBox aria-label="Search options"><Caret $grey /></DropBox>
    </SearchRow>
    <OpsList>
      <OpsGroup>Frequently Used</OpsGroup><OpsGroup>Test Actions</OpsGroup>
      <OpsItems>{actions.map(([Icon, t]) => <OpsItem key={t}><Icon />{t}</OpsItem>)}</OpsItems>
      {["Logging", "Web", "Checkpoints", "Statements", "Miscellaneous"].map((t) => <OpsGroup key={t}>{t}</OpsGroup>)}
    </OpsList>
  </Ops>
);

/* ---------- steps table ---------- */

const StepsArea = styled.div`flex: 1; min-width: 0; display: flex; flex-direction: column; gap: 4px;`;
const StepsBox = styled.div`display: flex; border: 1px solid ${line}; background: #fff;`;
const Steps = styled.table`
  flex: 1; width: 0; table-layout: fixed; border-collapse: collapse; font-family: ${grid};
  th { height: 18px; padding: 0 2px; text-align: left; font-weight: normal; line-height: 16px; background: linear-gradient(#fff 45%, #f1f2f4 50%); border-bottom: 1px solid #cfd1d5; border-right: 1px solid #e2e3e6; }
  td { padding: 0 0 0 2px; line-height: 16px; }
`;
const StepRow = styled.tr<{ $short?: boolean; $dim?: boolean; $sel?: boolean }>`
  height: ${(p) => (p.$short ? 17 : 19)}px; color: ${(p) => (p.$dim ? "#808080" : p.$sel ? "#fff" : "#000")};
  ${(p) => p.$sel && "td:nth-child(n+3) { background: #39f; border: dotted #c8781e; border-width: 1px 0; }"}
  td:first-child { background: #f0f0f0; border-bottom: 2px solid #a0a0a4; border-right: 1px solid #868a98; padding: 0; }
  td:nth-child(2) { padding: 0; }
`;
const Marker = styled.span`display: flex; align-items: center; justify-content: center;`;
const StepText = styled.span<{ $sel?: boolean }>`
  flex: 1; margin-left: 2px; padding-left: 1px; line-height: 19px;
  ${(p) => p.$sel && "align-self: stretch; background: #00f; outline: 1px dotted #ee0; outline-offset: -1px;"}
`;

type Step = { g: string; i: React.FC<any>; n: string; o?: string; v?: string; d?: string; dim?: boolean; sel?: boolean; mark?: "run" | "pic" };
const url = '"http://testlocation.dev03.reachcorp.local/frontend/"';
const F = "textboxGwtDebugForm";
const leaf = (n: string, o: string, v: string, d: string, i: React.FC<any> = o === "Keys" ? KeysIcon : ClickIcon): Step => ({ g: "| T", i, n, o, v, d });
const steps: Step[] = [
  { g: "T", i: RunScriptIcon, n: "Run Script Routine", o: "Library - RunBrowser", v: url, d: "Runs a script routine." },
  { g: "T", i: ChromeIcon, n: "Run Browser", o: "Chrome", v: url + ", ...", d: "Launches the specified browser and opens the specified URL in it.", dim: true },
  { g: "-", i: GlobeIcon, n: "browser" },
  { g: "|m", i: ChromeIcon, n: "pageHttpTestlocationDev03Reachco" },
  leaf("textbox", "Keys", '"velaga_cart[Tab]"', "Enters 'velaga_cart[Tab]' in the 'textbox' object."),
  leaf("passwordbox", "Keys", '"murali123"', "Enters 'murali123' in the 'passwordbox' object."),
  leaf("button", "ClickButton", "", "Clicks the 'button' button."),
  leaf(F + "Patientname", "Click", "82, 9, ...", `Clicks at point (82, 9) of the '${F}Patientname' object.`),
  leaf(F + "Patientname", "Keys", "Project.Variables.PatientFullname", "Enters Project.Variables.PatientFullname in the 'textboxGwtDebugFormP"),
  leaf("radiobuttonComReachcallFrontendC", "ClickButton", "", "Clicks the 'radiobuttonComReachcallFrontendC' radio button."),
  leaf("cell", "Click", "95, 6, ...", "Clicks at point (95, 6) of the 'cell' object."),
  leaf("panel", "Click", "118, 7, ...", "Clicks at point (118, 7) of the 'panel' object."),
  leaf(F + "Dateofbirth", "Click", "39, 14, ...", `Clicks at point (39, 14) of the '${F}Dateofbirth' object.`),
  leaf(F + "Dateofbirth", "Keys", "Project.Variables.PatientDOB", "Enters Project.Variables.PatientDOB in the 'textboxGwtDebugFormDateo"),
  leaf(F + "Roombed", "Click", "28, 7, ...", `Clicks at point (28, 7) of the '${F}Roombed' object.`),
  leaf(F + "Roombed", "Keys", '"R1B1"', `Enters 'R1B1' in the '${F}Roombed' object.`),
  leaf(F + "Medicalrecord", "Click", "39, 12, ...", `Clicks at point (39, 12) of the '${F}Medicalrecord' object.`),
  leaf("checkbox", "ClickChecked", "true", "Sets the state of the 'checkbox' checkbox to True."),
  leaf("textareaGwtDebugConsulttypedetai", "Drag", "66, 41, 5, 3, ...", "Drags from point (66, 41) of the 'textareaGwtDebugConsulttypedetai' ob", DragIcon),
  leaf("textareaGwtDebugConsulttypedetai", "Keys", '"Reason for consult"', "Enters 'Reason for consult' in the 'textareaGwtDebugConsulttypedetai' o"),
  leaf("buttonGwtDebugFormSubmitbtn", "ClickButton", "", "Clicks the 'buttonGwtDebugFormSubmitbtn' button."),
  { ...leaf("imageStaticresourcedownloadservi", "Click", "85, 28, ...", "Clicks at point (85, 28) of the 'imageStaticresourcedownloadservi' object."), g: "| L" },
  { g: "T", i: RunScriptIcon, n: "Run Script Routine", o: "Library - CloseBrowser", d: "Runs a script routine.", dim: true },
  { g: "T", i: ChromeIcon, n: "Navigate", o: "Chrome", v: url + ", ...", d: "Opens the specified URL in a running instance of the specified browser.", dim: true },
  { g: "T", i: ChromeIcon, n: "Navigate", o: "Chrome", v: url + ", ...", d: "Opens the specified URL in a running instance of the specified browser." },
  { g: "m", i: GlobeIcon, n: "browser" },
  { g: " m", i: ChromeIcon, n: "pageHttpTestlocationDev03Reachco" },
  { g: "  T", i: ClickIcon, n: "panel", o: "Click", v: "2, 90", d: "Clicks at point (2, 90) of the 'panel' object.", sel: true, mark: "run" },
  { g: "  T", i: ClickIcon, n: "panel", o: "Click", v: "10, 87", d: "Clicks at point (10, 87) of the 'panel' object.", mark: "pic" },
];

const Scroll = styled.div`width: 17px; flex: none; display: flex; flex-direction: column; align-items: center; background: #f1f1f1; border-left: 1px solid #e3e3e3; padding: 8px 0;`;
const Thumb = styled.div`width: 15px; height: 420px; margin: 22px 0 auto; border: 1px solid #979797; border-radius: 2px; background: linear-gradient(90deg, #f5f5f5, #dcdcdc 50%, #c3c3c3); display: flex; align-items: center; justify-content: center;`;

const StepsGrid = () => (
  <StepsBox>
    <Steps>
      <colgroup><col style={{ width: 25 }} /><col style={{ width: 368 }} /><col style={{ width: 370 }} /><col style={{ width: 368 }} /><col /></colgroup>
      <thead><tr><th aria-label="Marker" /><th>Item</th><th>Operation</th><th>Value</th><th>Description</th></tr></thead>
      <tbody>
        {steps.map((s, i) => {
          const short = !s.o;
          return (
            <StepRow key={i} $short={short} $dim={s.dim} $sel={s.sel}>
              <td>{s.mark && <Marker>{s.mark === "run" && <Svg w={7} box="0 0 7 16"><path d="M0 0l7 8-7 8z" fill="#2f9e33" /></Svg>}<PicIcon /></Marker>}</td>
              <td><TreeRow $h={short ? 17 : 19}><Guides g={s.g} /><s.i /><StepText $sel={s.sel}>{s.n}</StepText></TreeRow></td>
              <td>{s.o}</td><td>{s.v}</td><td>{s.d}</td>
            </StepRow>
          );
        })}
      </tbody>
    </Steps>
    <Scroll><UpCaret /><Thumb><Svg s={9} box="0 0 9 9"><path d="M1 1.5h7M1 4.5h7M1 7.5h7" stroke="#666" /></Svg></Thumb><Caret /></Scroll>
  </StepsBox>
);

/* ---------- workspace ---------- */

const docTabs: [React.FC, string, number][] = [
  [StartIcon, "Start Page", 102], [DocIcon, "Library", 85], [ResultIcon, "Keyword Test Log [Test1] 11/5/20...", 229], [DocIcon, "Library", 85],
  [SuiteIcon, "ProjectSuite2", 116], [DocIcon, "TC_Patient_reg", 126], [DocKeyIcon, "TC_Patient_reg", 129], [DocKeyIcon, "Test5", 79],
  [DocKeyIcon, "Test6", 79], [DocKeyIcon, "Test3", 79], [DocKeyIcon, "Tab_test", 94], [MapIcon, "NameMapping", 118],
];
const TabMenu = styled.button`width: 17px; height: 18px; margin: 0 2px 3px auto; padding: 0; border: 1px solid #666; background: #eee; display: flex; align-items: center; justify-content: center;`;
const Outer = styled(Frame)`margin: -1px 3px 0 0; padding-top: 3px;`;
const Split = styled.div`display: flex; gap: 3px;`;
const GreyArea = styled.div`background: #f0f0f0; padding-bottom: 7px;`;
const ListHead = styled.div`height: 18px; padding: 0 3px; line-height: 18px; border-bottom: 1px solid #d8dade; background: linear-gradient(#fff 45%, #f1f2f4 50%);`;
const WhiteGap = styled.div`height: 5px; background: #fff; flex: none;`;
const LowerFrame = styled(Frame)`margin-right: 3px;`;

const Workspace = () => (
  <Column>
    <PanelHead $strong><PencilIcon />Workspace
      <HeadTools $g={1}><HeadButton>?</HeadButton><HeadButton aria-label="Restore"><Svg s={9} box="0 0 9 9"><path d="M1 1.500h7v6H1z" fill="#fff" stroke="#555" /></Svg></HeadButton><HeadX red /></HeadTools>
    </PanelHead>
    <Tabs $h={26} $pad={2}>
      {docTabs.map(([Icon, t, w], i) => <Tab key={i} $w={w} $on={i === 6} $h={21}><Icon />{t}<b>X</b></Tab>)}
      <TabMenu aria-label="Open documents"><Caret /></TabMenu>
    </Tabs>
    <Outer $p={2}>
      <Frame $p={2}>
        <Split>
          <Operations />
          <StepsArea>
            <ToolBar $h={27} $g={8}>
              <Grip />
              <Tool $dim><Gray d={gHead} />Record New Test</Tool><Tool $dim><Gray d={gPlus} />Append to Test</Tool><Tool $dim><Gray d={gPlay} w={12} />Run Test</Tool><Sep />
              <Tool $dim><Gray d={gPlus} />Add Variable</Tool><Tool $dim><Gray d={gPlus} />Add Parameter</Tool><Sep />
              {[gUp, gDown, gLeft, gRight].map((d) => <Tool key={d}><Gray d={d} /></Tool>)}<Sep /><Tool><ScriptIcon /></Tool>
            </ToolBar>
            <StepsGrid />
          </StepsArea>
        </Split>
      </Frame>
      <GreyArea>
        <Tabs $h={22} $down>
          <Tab $w={84} $down $on $h={19}><DocKeyIcon />Test Steps</Tab><Tab $w={73} $down $h={19}><WinIcon mark={<path d="M4 7l1 4 1-4M8 8h2M8 10h2M12 7v4" stroke="#333" fill="none" />} />Variables</Tab><Tab $w={84} $down $h={19}><DocKeyIcon />Parameters</Tab>
        </Tabs>
      </GreyArea>
      <PanelHead><PicIcon />Test Visualizer<HeadTools><HeadX /></HeadTools></PanelHead>
    </Outer>
    <WhiteGap />
    <LowerFrame $p={2} $grow>
      <PanelHead><WinIcon mark={stackMark} />Call Stack<HeadTools><HeadButton>?</HeadButton><PinIcon /><HeadX /></HeadTools></PanelHead>
      <Frame $p={0} $grow><ListHead>Call Stack</ListHead></Frame>
    </LowerFrame>
    <Tabs $h={23} $down>
      <Tab $w={58} $down $on>Call Stack</Tab><Tab $w={39} $down>Locals</Tab><Tab $w={60} $down>Watch List</Tab><Tab $w={65} $down>Breakpoints</Tab>
    </Tabs>
  </Column>
);

/* ---------- footer and taskbar ---------- */

const Bottom = styled.div`background: #fff; padding-top: 5px;`;
const Status = styled.div`
  height: 19px; display: flex; align-items: center; background: #f0ecec; color: #9a9a9a; font-size: 11px;
  b { color: #222; font-weight: normal; }
`;
const StatusCell = styled.span<{ $w: number }>`width: ${(p) => p.$w}px; padding-left: 3px; height: 17px; border-right: 1px solid #cfcbcb; display: flex; align-items: center; gap: 8px;`;
const TaskBar = styled.footer`
  height: 40px; flex: none; display: flex; align-items: stretch; gap: 4px; border-top: 1px solid #111c38; box-shadow: inset 0 1px #6d88b8;
  background: linear-gradient(90deg, #1e3c80, #1d3978 20%, #23458f 35%, #1c3a7c 60%, #1a3470 80%, #17305f); color: #fff;
`;
const Task = styled.button<{ $open?: boolean; $lit?: boolean }>`
  width: 58px; padding: 0; border: 1px solid transparent; background: none; display: flex; align-items: center; justify-content: center;
  ${(p) => p.$open && `border-color: #c3cfe6; border-radius: 3px; background: ${p.$lit ? "linear-gradient(135deg, #dfe6f4, #8d9fc6)" : "linear-gradient(135deg, #7f93c2, #2c4a8e)"};`}
`;
const Tray = styled.div`margin-left: auto; display: flex; align-items: center; gap: 8px; font-size: 11px;`;
const Clock = styled.time`width: 60px; text-align: center; line-height: 17px; font-size: 12px;`;
const ShowDesktop = styled.button`width: 15px; align-self: stretch; border: 1px solid #5d7ab0; background: linear-gradient(135deg, #5d79ae, #20407f); padding: 0;`;

const Task32 = ({ children }: { children: React.ReactNode }) => <Svg s={32} box="0 0 32 32">{children}</Svg>;
const Taskbar = () => (
  <TaskBar>
    <Task aria-label="Start"><Svg s={38} box="0 0 38 38"><circle cx="19" cy="19" r="18" fill="#1e5c93" stroke="#7ea6c9" /><path d="M4 15a15 13 0 0 1 30 0c-8 5-22 5-30 0z" fill="#7fb0d6" opacity=".6" /><path d="M9 12q5-3 9 0l-1 7q-4-3-9 0z" fill="#ef5a2a" /><path d="M20 12q4 3 9 0l-1 7q-5 3-9 0z" fill="#8ac43f" /><path d="M8 21q4-3 9 0l-1 7q-4-3-9 0z" fill="#3fa3e0" /><path d="M19 21q4 3 9 0l-1 7q-5 3-9 0z" fill="#fbc630" /></Svg></Task>
    <Task aria-label="Internet Explorer"><Task32><path d="M25 20A9.5 9.5 0 1 1 26 15H9" stroke="#58c4f4" strokeWidth="5" fill="none" /><path d="M4 30C-2 24 14 4 28 2c4 0 2 5 0 7 1-5-3-5-8-2C10 12 3 24 7 28z" fill="#f6c42c" /></Task32></Task>
    <Task aria-label="Explorer"><Task32><path d="M2 4h28v22H2z" fill="#f3d778" stroke="#c99f3a" /><path d="M4 2h8v3H4z" fill="#4aa54a" /><path d="M14 3h8v3h-8z" fill="#d8452e" /><path d="M2 9h28v17H2z" fill="#fbe9a6" /><path d="M6 30V19h20v11h-5v-6H11v6z" fill="#8cc9ee" stroke="#4a93c4" /></Task32></Task>
    <Task $open $lit aria-label="Chrome"><ChromeIcon s={30} /></Task>
    <Task aria-label="Outlook"><Task32><path d="M2 1h28v29H2z" fill="#fbbf3a" stroke="#fff" /><path d="M14 15l16 3v12H8z" fill="#fbe6b9" /><ellipse cx="11" cy="13" rx="6" ry="8" fill="none" stroke="#e06c0a" strokeWidth="4" /><circle cx="25" cy="14" r="5" fill="#fff" stroke="#e0951f" /><path d="M25 11v3h3" stroke="#c56d08" fill="none" /></Task32></Task>
    <Task aria-label="Snipping Tool"><Task32><ellipse cx="13" cy="10" rx="11" ry="9" fill="#f5f2f2" stroke="#c93a3a" strokeWidth="2" /><path d="M6 3l17 20M19 3L17 26" stroke="#c8ccd2" strokeWidth="3" /><circle cx="17" cy="28" r="3" fill="none" stroke="#2a9ae0" strokeWidth="2" /><circle cx="26" cy="23" r="4" fill="none" stroke="#2a9ae0" strokeWidth="2" /></Task32></Task>
    <Task $open aria-label="Talk"><Task32><ellipse cx="16" cy="13" rx="15" ry="12" fill="#fff" stroke="#555" /><path d="M12 24l-2 8 9-8z" fill="#fff" /><text x="4" y="18" fontFamily="Liberation Sans" fontWeight="bold" fontSize="14"><tspan fill="#3a6fd8">t</tspan><tspan fill="#d8352a">a</tspan><tspan fill="#e8a51a">l</tspan><tspan fill="#2f9c3f">k</tspan></text></Task32></Task>
    <Task $open aria-label="TestComplete"><TcMark s={32} /></Task>
    <Tray>
      <Svg><path d="M2 4l6-2 6 2-1 8-5 3-5-3z" fill="#e9ecf2" /><path d="M5 7l3 4 3-4" stroke="#445" fill="none" /></Svg>
      <Svg><path d="M2 2h9v12H2z" fill="#e5eef5" /><circle cx="10" cy="9" r="5" fill="#6db846" stroke="#e5eef5" /></Svg>
      <Svg><path d="M2 3h12v10H2z" fill="#dfe5ee" /><circle cx="9" cy="9" r="4" fill="#4bb04f" /></Svg>
      <Svg><path d="M1 8l6-5v3h7v5H7v3z" fill="#7cb8e8" /><circle cx="11" cy="9" r="4" fill="#d9dde6" /></Svg>
      <Svg><circle cx="8" cy="8" r="6" fill="#f0f0f0" /><path d="M4 4l8 8" stroke="#d33" strokeWidth="2" /></Svg>
      <Svg><path d="M2 3h12v8H2zM5 13h6" fill="#dfe3ea" stroke="#eee" /><path d="M4 5h8v4H4z" fill="#3a5f9c" /></Svg>
      <Svg><path d="M1 14L15 2v12z" fill="#f2f4f8" /></Svg>
      <Svg><path d="M2 6h3l4-4v12l-4-4H2z" fill="#f2f4f8" /><circle cx="12" cy="12" r="3.500" fill="#d8322a" /><path d="M10 10l4 4" stroke="#fff" /></Svg>
      <Clock>10:43 AM<br />11/7/2013</Clock>
      <ShowDesktop aria-label="Show desktop" />
    </Tray>
  </TaskBar>
);

/* ---------- floating indicator ---------- */

const Indicator = styled.aside`position: absolute; top: 24px; right: 18px; width: 103px;`;
const IndicatorBox = styled.div`height: 41px; display: flex; align-items: center; gap: 3px; border: 1px solid #9c9892; border-radius: 5px; background: #fff; overflow: hidden;
  > span { width: 41px; align-self: stretch; display: flex; align-items: center; justify-content: center; background: linear-gradient(#e6e6e6, #c4c4c4); border-right: 1px solid #a5a19b; margin-right: 3px; }
`;
const RoundKey = styled.button`width: 22px; height: 22px; padding: 0; display: flex; align-items: center; justify-content: center; border: 1px solid #9e9888; border-radius: 5px; background: linear-gradient(#fbfaf6, #bdb5a3);`;
const Balloon = styled.div`
  margin: 3px 0 0 23px; height: 43px; padding: 3px; border: 1px solid #76767a; border-radius: 4px; background: linear-gradient(#fff, #e4e5ef); text-align: right;
  p { margin: 0; padding-right: 3px; line-height: 16px; } p + p { border-top: 1px solid #000; }
`;

const menu: [string, string, string][] = [["", "F", "ile"], ["", "E", "dit"], ["", "V", "iew"], ["Te", "s", "t"], ["", "D", "ebug"], ["", "T", "ools"], ["", "H", "elp"]];

const IdeWindow = () => (
  <Ide>
    <TitleBar><TcMark /><span>TestComplete - C:\Users\murali.velaga\Documents\TestComplete 9 Projects\ProjectSuite2\ProjectSuite2.pjs</span><WindowControls /></TitleBar>
    <MenuBar><Grip />{menu.map(([a, b, c]) => <MenuItem key={b + c}>{a}<u>{b}</u>{c}</MenuItem>)}<Caret $low /></MenuBar>
    <ToolBar $h={28}>
      <Grip /><Tool><span><u>N</u>ew</span><Caret /></Tool><Sep $m={-1} /><Tool><Gray d={gOpen} /></Tool><Tool><Gray d={gClose} /></Tool><Sep /><Tool><SaveIcon /></Tool><Caret $low />
      <Grip /><Tool><Gray d={gUndo} /></Tool><Tool><Gray d={gRedo} /></Tool><Sep /><Tool><Gray d={gCut} /></Tool><Tool><CopyIcon /></Tool><Tool><Gray d={gPaste} /></Tool><Tool><Gray d={gX} /></Tool><Caret $low />
      <Grip /><Tool><Gray d={gDoc} /></Tool><Tool><Gray d={gGear} /></Tool><Tool><Gray d={gCheck} /><Caret $grey /></Tool><Tool><CameraIcon /></Tool><Tool><Gray d={gList} /></Tool><Caret $low />
      <Grip /><Tool><Gray d={gHead} /><Caret $grey /></Tool><Tool><Gray d={gPlay} /></Tool>
      <Tool><Svg s={14} box="0 0 14 14"><path d="M.5.5h13v13H.5z" fill="#1676e0" stroke="#0b4ba0" /></Svg>Stop</Tool>
      <Tool $on aria-label="Log options"><ToggleDocIcon /></Tool><Caret $low />
      <Grip /><Tool aria-label="Pause"><Pause /></Tool><Sep /><Tool><Gray d={gStep} /></Tool><Tool><Gray d={gOver} /></Tool><Tool><Gray d={gOut} /></Tool><Sep /><Tool><Gray d={gCalc} /></Tool><Sep />
      <Tool><WinIcon mark={<path d="M4 6l3 1v3l3 1-1 2-5-2z" fill="#d8322a" />} /></Tool>
      <Tool><WinIcon mark={<path d="M4 6h8M4 8h7M5 13l2-3 2 3 2-3 2 3" stroke="#345" fill="none" />} /></Tool>
      <Tool><WinIcon mark={<path d="M4 7l3 6 6-7" stroke="#b04fc4" strokeWidth="1.5" fill="none" />} /></Tool>
      <Tool><WinIcon mark={stackMark} /></Tool><Caret $low />
    </ToolBar>
    <Tabs $h={23}><Tab $w={103} $on>Project Workspace</Tab><Tab $w={82}>Object Browser</Tab></Tabs>
    <Body><ProjectExplorer /><Workspace /></Body>
    <Bottom>
      <Tabs $h={19}><Tab $w={71} $off>Bookmarks</Tab><Tab $w={130} $off>Search/Replace Results</Tab><Tab $w={43}>To Do</Tab></Tabs>
      <Status><StatusCell $w={54} /><StatusCell $w={54} /><StatusCell $w={98}>CAPS <b>NUM</b> SCRL</StatusCell><StatusCell $w={34} /></Status>
    </Bottom>
    <Taskbar />
    <Indicator>
      <IndicatorBox><span><TcMark s={32} /></span>
        <RoundKey aria-label="Pause"><Svg s={10} box="0 0 10 10"><path d="M1 1h3v8H1zM6 1h3v8H6z" fill="#4a4a4a" /></Svg></RoundKey>
        <RoundKey aria-label="Stop"><Svg s={9} box="0 0 9 9"><path d="M0 0h9v9H0z" fill="#4a4a4a" /></Svg></RoundKey>
      </IndicatorBox>
      <Balloon><p>Stopping...</p><p>TestProject2</p></Balloon>
    </Indicator>
  </Ide>
);

export default function App() {
  return <Screens><Global /><BrowserWindow /><IdeWindow /></Screens>;
}
